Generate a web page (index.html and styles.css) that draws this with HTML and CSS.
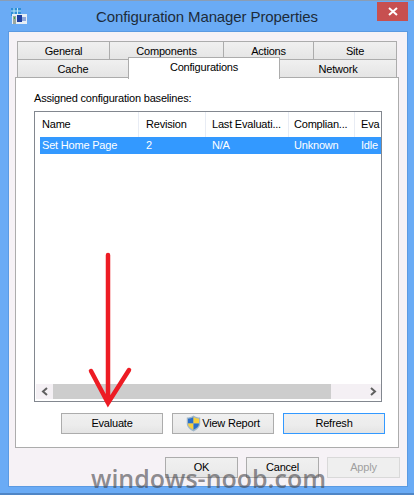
FILE: index.html
```html
<!DOCTYPE html>
<html lang="en">
<head>
    <meta charset="UTF-8">
    <title>Configuration Manager Properties</title>
    <link rel="stylesheet" href="styles.css">
</head>
<body>
    <div class="titlebar">
        <svg class="app-icon" width="17" height="17" viewBox="0 0 17 17">
            <rect x="0" y="0" width="10" height="8" fill="#2f8fd8"/>
            <path d="M0 3h10M3 0v8M6.500 0v8" stroke="#bfe6f7" stroke-width="1"/>
            <rect x="1" y="6" width="15" height="10" fill="#e6eef5"/>
            <rect x="2" y="8" width="3" height="8" fill="#9aa7a0"/>
            <rect x="3" y="9" width="1" height="2" fill="#39b54a"/>
            <rect x="6" y="7" width="5" height="7" fill="#1f3f9f"/>
            <rect x="11" y="9" width="4" height="4" fill="#8ea6dc"/>
        </svg>
        <h1 class="title">Configuration Manager Properties</h1>
        <div class="close">
            <svg width="10" height="9" viewBox="0 0 10 9"><path d="M1 1l8 7M9 1l-8 7" stroke="#fff" stroke-width="2"/></svg>
        </div>
    </div>

    <div class="client">
        <div class="tabs">
            <div class="tab-row">
                <div class="tab general">General</div>
                <div class="tab components">Components</div>
                <div class="tab actions">Actions</div>
                <div class="tab site">Site</div>
            </div>
            <div class="tab-row">
                <div class="tab cache">Cache</div>
                <div class="tab configurations">Configurations</div>
                <div class="tab network">Network</div>
            </div>
        </div>

        <div class="panel">
            <p class="label">Assigned configuration baselines:</p>
            <div class="list">
                <div class="list-row list-head">
                    <div class="cell col-name">Name</div>
                    <div class="cell col-rev">Revision</div>
                    <div class="cell col-last">Last Evaluati...</div>
                    <div class="cell col-comp">Complian...</div>
                    <div class="cell col-eval">Eva</div>
                </div>
                <div class="list-row selected">
                    <div class="cell col-name">Set Home Page</div>
                    <div class="cell col-rev">2</div>
                    <div class="cell col-last">N/A</div>
                    <div class="cell col-comp">Unknown</div>
                    <div class="cell col-eval">Idle</div>
                </div>
                <div class="scrollbar">
                    <div class="scroll-btn">
                        <svg width="8" height="9" viewBox="0 0 8 9"><path d="M6 1L2 4.500l4 3.500" fill="none" stroke="#606060" stroke-width="2"/></svg>
                    </div>
                    <div class="thumb"></div>
                    <div class="scroll-btn">
                        <svg width="8" height="9" viewBox="0 0 8 9"><path d="M2 1l4 3.500L2 8" fill="none" stroke="#606060" stroke-width="2"/></svg>
                    </div>
                </div>
            </div>
            <div class="panel-buttons">
                <button class="btn wide">Evaluate</button>
                <button class="btn wide">
                    <svg class="shield" width="15" height="17" viewBox="0 0 15 17">
                        <path d="M7.500 .5C5.500 2 3 2.500 .8 2.500v6c0 3.500 3 6 6.700 8 3.700-2 6.700-4.500 6.700-8v-6C12 2.500 9.500 2 7.500 .5z" fill="#9fb6c8"/>
                        <path d="M7.500 2C6 3 4 3.500 2 3.700V8.500h5.500z" fill="#2a6fc9"/>
                        <path d="M7.500 2C9 3 11 3.500 13 3.700V8.500H7.500z" fill="#f7cf3c"/>
                        <path d="M2 8.500h5.500v6.300C4.500 13.300 2 11.300 2 8.500z" fill="#f7cf3c"/>
                        <path d="M13 8.500H7.500v6.300c3-1.500 5.500-3.500 5.500-6.300z" fill="#2a6fc9"/>
                    </svg>View Report
                </button>
                <button class="btn wide focused">Refresh</button>
            </div>
        </div>

        <div class="footer">
            <button class="btn small">OK</button>
            <button class="btn small">Cancel</button>
            <button class="btn small disabled">Apply</button>
        </div>
    </div>

    <svg class="arrow" width="60" height="170" viewBox="0 0 60 170">
        <path d="M28 3v148M11 119l17 32 21-33" fill="none" stroke="#ed1c24" stroke-width="4.500" stroke-linecap="round" stroke-linejoin="miter"/>
    </svg>
    <div class="watermark">windows-noob.com</div>
</body>
</html>
```

FILE: styles.css
```css
* {
    box-sizing: border-box;
}

body {
    margin: 0;
    width: 414px;
    height: 495px;
    overflow: hidden;
    position: relative;
    background: #6aabf5;
    border-top: 1px solid #8a9db5;
    border-bottom: 2px solid #4f86c6;
    font-family: "Liberation Sans", sans-serif;
    font-size: 11px;
    letter-spacing: -0.2px;
    color: #000;
}

.titlebar {
    height: 31px;
    display: flex;
    align-items: flex-start;
    padding-left: 11px;
    position: relative;
}

.app-icon {
    margin-top: 7px;
}

.title {
    margin: 7px 0 0 68px;
    font-size: 15px;
    font-weight: 400;
    letter-spacing: -0.1px;
    color: #1d2b3a;
    white-space: nowrap;
}

.close {
    width: 31px;
    height: 19px;
    margin: 1px 6px 0 auto;
    background: #c75050;
    display: flex;
    align-items: center;
    justify-content: center;
}

.client {
    width: 398px;
    height: 454px;
    margin-left: 9px;
    background: #f6f2f6;
    box-shadow: 0 0 0 1px #5b9ae2;
    padding-top: 9px;
}

.tabs {
    margin-left: 8px;
    width: 380px;
    position: relative;
    z-index: 1;
}

.tab-row {
    display: flex;
    height: 18px;
}

.tab {
    height: 19px;
    background: linear-gradient(#f0f0f0, #e5e5e5);
    border: 1px solid #acacac;
    margin-right: -1px;
    text-align: center;
    line-height: 18px;
}

.general { width: 93px; }
.components { width: 115px; }
.actions { width: 91px; }
.site { width: 84px; }
.cache { width: 112px; }
.network { width: 118px; }

.tab.configurations {
    width: 152px;
    height: 22px;
    margin-top: -2px;
    background: #fff;
    border-bottom: 0;
    line-height: 18px;
}

.panel {
    width: 384px;
    height: 371px;
    margin-left: 6px;
    background: #fff;
    border: 1px solid #acacac;
    padding: 12px 16px 0 18px;
}

.label {
    margin: 0 0 5px 0;
    height: 16px;
    line-height: 16px;
}

.list {
    width: 348px;
    height: 291px;
    border: 1px solid #82878f;
    position: relative;
    display: flex;
    flex-direction: column;
    padding-left: 5px;
    margin-top: 4px;
}

.list-row {
    display: flex;
    flex: none;
}

.list-head {
    height: 25px;
    line-height: 24px;
}

.list-head .cell {
    border-right: 1px solid #e8ecf4;
}

.selected {
    height: 17px;
    line-height: 16px;
    background: #3399ff;
    color: #fff;
}

.cell {
    padding-left: 2px;
    overflow: hidden;
    white-space: nowrap;
}

.col-name { width: 99px; }
.col-rev { width: 67px; padding-left: 7px; }
.col-last { width: 83px; padding-left: 6px; }
.col-comp { width: 66px; padding-left: 5px; }
.col-eval { flex: 1; padding-left: 6px; }

.list-head .col-eval {
    border-right: 0;
}

.scrollbar {
    margin-top: auto;
    margin-left: -4px;
    margin-bottom: 2px;
    height: 15px;
    background: #f4f0f4;
    display: flex;
    align-items: center;
}

.scroll-btn {
    width: 17px;
    height: 15px;
    display: flex;
    align-items: center;
    justify-content: center;
}

.thumb {
    width: 278px;
    height: 15px;
    background: #cdcdcd;
}

.scroll-btn:last-child {
    margin-left: auto;
}

.panel-buttons {
    display: flex;
    gap: 9px;
    width: 351px;
    margin: 11px 0 0 27px;
}

.btn {
    flex: none;
    height: 21px;
    padding: 0 0 2px;
    background: linear-gradient(#f0f0f0 0, #ececec 60%, #e4e4e4 100%);
    border: 1px solid #acacac;
    font: inherit;
    letter-spacing: inherit;
    color: #000;
    display: flex;
    align-items: center;
    justify-content: center;
}

.wide {
    width: 102px;
}

.btn.focused {
    border-color: #3399ff;
}

.shield {
    margin: 2px 1px 0 0;
}

.footer {
    display: flex;
    justify-content: flex-end;
    gap: 8px;
    margin-top: 9px;
    padding-right: 7px;
}

.small {
    width: 73px;
}

.btn.disabled {
    background: #efefef;
    border-color: #d9d9d9;
    color: #a0a0a0;
}

.arrow {
    position: absolute;
    left: 80px;
    top: 251px;
}

.watermark {
    position: absolute;
    left: 91px;
    top: 457px;
    font-family: "Open Sans", sans-serif;
    font-size: 25px;
    font-weight: 600;
    line-height: 40px;
    letter-spacing: 0;
    color: rgba(70, 70, 75, 0.62);
    white-space: nowrap;
}
```
